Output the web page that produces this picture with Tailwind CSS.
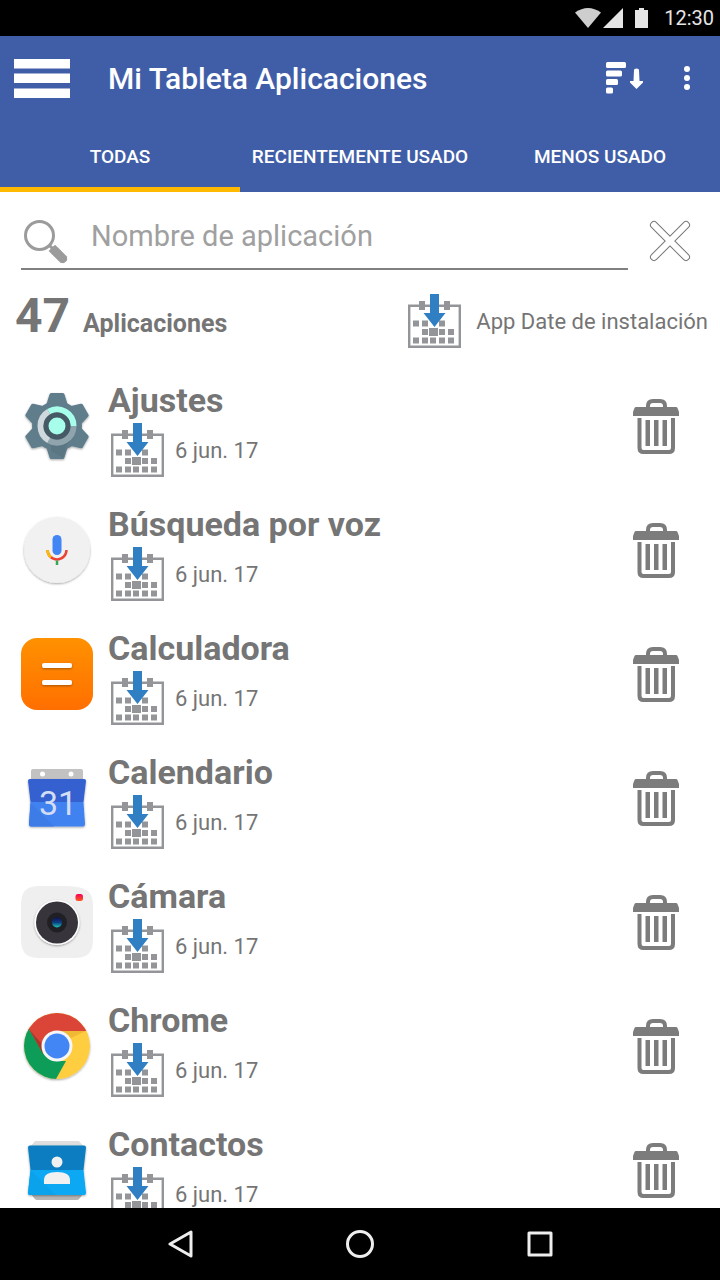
<!DOCTYPE html>
<html lang="es">
<head>
  <meta charset="UTF-8" />
  <meta name="viewport" content="width=device-width, initial-scale=1.0" />
  <title>Mi Tableta Aplicaciones</title>
  <script src="https://cdn.jsdelivr.net/npm/@tailwindcss/browser@4"></script>
  <script defer>
    document.addEventListener("DOMContentLoaded", () => {
      const apps = [
        { name: "Ajustes", icon: "settings", date: "6 jun. 17" },
        { name: "Búsqueda por voz", icon: "voice", date: "6 jun. 17" },
        { name: "Calculadora", icon: "calculator", date: "6 jun. 17" },
        { name: "Calendario", icon: "calendar", day: "31", date: "6 jun. 17" },
        { name: "Cámara", icon: "camera", date: "6 jun. 17" },
        { name: "Chrome", icon: "chrome", date: "6 jun. 17" },
        { name: "Contactos", icon: "contacts", date: "6 jun. 17" },
      ];
      const list = document.getElementById("appList");

      apps.forEach((app) => {
        const day = app.day
          ? `<span class="absolute inset-x-0 top-5 pl-0.5 text-center text-[34px] leading-[42px] text-[#d3ddf5]">${app.day}</span>`
          : "";
        const li = document.createElement("li");
        li.className = "flex h-[124px] items-center pl-[21px] pr-[41px]";
        li.innerHTML = `
          <div class="relative shrink-0"><svg class="size-[72px]"><use href="#${app.icon}" /></svg>${day}</div>
          <div class="ml-[15px] flex-1 self-start pt-[17px]">
            <h2 class="pb-1 text-[34px] leading-[38px] font-bold">${app.name}</h2>
            <div class="ml-[3px] flex items-center gap-[11px]">
              <svg class="h-[54px] w-[53px]"><use href="#install-date" /></svg>
              <span class="text-[22px]">${app.date}</span>
            </div>
          </div>
          <button class="pt-0.5" aria-label="Desinstalar ${app.name}"><svg class="h-14 w-[46px]"><use href="#trash" /></svg></button>
        `;
        list.appendChild(li);
      });
    });
  </script>
</head>
<body class="flex h-screen flex-col overflow-hidden bg-white font-['Roboto',sans-serif] text-[#757575]">

  <!-- icons -->
  <svg class="absolute h-0 w-0" aria-hidden="true">
    <defs>
      <linearGradient id="orange" x1="0" y1="0" x2="0" y2="1"><stop offset="0" stop-color="#ff9100" /><stop offset="1" stop-color="#ff6f00" /></linearGradient>
      <linearGradient id="pupil" x1="0" y1="0" x2="0" y2="1"><stop offset="0" stop-color="#10105c" /><stop offset=".5" stop-color="#0d3f80" /><stop offset="1" stop-color="#1cc5c0" /></linearGradient>
      <linearGradient id="flash" x1="0" y1="0" x2="0" y2="1"><stop offset="0" stop-color="#f5005c" /><stop offset="1" stop-color="#ff5a1e" /></linearGradient>
      <filter id="shadow" x="-20%" y="-20%" width="140%" height="150%"><feDropShadow dx="0" dy="1" stdDeviation="0.8" flood-opacity=".35" /></filter>
      <path id="tooth" d="M30 3h12q1 0 1.500 1.500l3 9.500h-21l3-9.500q.5-1.500 1.500-1.500z" />
      <clipPath id="disc"><circle cx="36" cy="36" r="33" /></clipPath>
    </defs>

    <symbol id="install-date" viewBox="0 0 53 54">
      <path d="M1.200 11.700h50.600v41.100H1.200z" fill="#fff" stroke="#939598" stroke-width="2.400" />
      <path fill="#939598" d="M11 7h6v9h-6zM36 7h6v9h-6zM5 26.500h6v6H5zM14 26.500h6v6h-6zM31 26.500h6v6h-6zM14 35h6v6h-6zM21 34h9v8h-9zM31 35h6v6h-6zM40 35h6v6h-6zM5 43.500h6v6H5zM14 43.500h6v6h-6zM22 43.500h6v6h-6zM31 43.500h6v6h-6zM40 43.500h6v6h-6z" />
      <path fill="#317fc3" d="M22 0h9v19h6.500L26.500 33 15.500 19H22z" />
    </symbol>

    <symbol id="trash" viewBox="0 0 46 56">
      <path d="M15 9V7q0-5 5-5h7q5 0 5 5v2" fill="none" stroke="#7c7c7c" stroke-width="4" />
      <path fill="#7c7c7c" d="M3 8h40q1 0 1.500 1l1.500 4v4H0v-4l1.500-4Q2 8 3 8z" />
      <path d="M6.500 19v30q0 4 4 4h25.500q4 0 4-4V19" fill="none" stroke="#7c7c7c" stroke-width="4" />
      <path fill="#7c7c7c" d="M12.500 21h4.500v26h-4.500zM21 21h4.500v26H21zM29.500 21H34v26h-4.500z" />
    </symbol>

    <symbol id="settings" viewBox="0 0 72 72">
      <g fill="#607d8b" filter="url(#shadow)">
        <circle cx="36" cy="36" r="25" />
        <use href="#tooth" />
        <use href="#tooth" transform="rotate(60 36 36)" />
        <use href="#tooth" transform="rotate(120 36 36)" />
        <use href="#tooth" transform="rotate(180 36 36)" />
        <use href="#tooth" transform="rotate(240 36 36)" />
        <use href="#tooth" transform="rotate(300 36 36)" />
      </g>
      <path d="M50 50L46 55 42 68 30 61V52z" fill="#5a7683" />
      <g fill="none" stroke-width="6">
        <path d="M27.750 21.710A16.500 16.500 0 0 1 52.500 36" stroke="#a7ffeb" />
        <path d="M52.500 36A16.500 16.500 0 0 1 27.750 50.290" stroke="#90a4ae" />
        <path d="M27.750 50.290A16.500 16.500 0 0 1 27.750 21.710" stroke="#cfd8dc" />
      </g>
      <circle cx="36" cy="36" r="13.500" fill="#455a64" />
      <circle cx="36" cy="36" r="8.500" fill="#a7ffeb" />
    </symbol>

    <symbol id="voice" viewBox="0 0 72 72">
      <circle cx="36" cy="36" r="33" fill="#f1f1f1" filter="url(#shadow)" />
      <rect x="31.500" y="21" width="9" height="20" rx="4.500" fill="#4285f4" />
      <path d="M26.500 36a9.500 9.500 0 0 0 19 0" fill="none" stroke="#ea4335" stroke-width="2.500" />
      <path d="M26.500 36a9.500 9.500 0 0 0 3.500 7.300" fill="none" stroke="#fbbc05" stroke-width="2.500" />
      <path d="M36 46.500V51" stroke="#34a853" stroke-width="2.500" />
    </symbol>

    <symbol id="calculator" viewBox="0 0 72 72">
      <rect width="72" height="72" rx="16" fill="url(#orange)" />
      <g fill="#fff" filter="url(#shadow)">
        <rect x="21" y="25" width="30" height="5" rx="2" />
        <rect x="21" y="42" width="30" height="5" rx="2" />
      </g>
    </symbol>

    <symbol id="calendar" viewBox="0 0 72 72">
      <path d="M12 7h48q2 0 2 2v10H10V9q0-2 2-2z" fill="#c2c2c2" />
      <circle cx="21.500" cy="12" r="2.500" fill="#fff" />
      <circle cx="50" cy="12" r="2.500" fill="#fff" />
      <g filter="url(#shadow)">
        <path d="M9 17h54q2 0 2 2l-2.500 21h-53L7 19q0-2 2-2z" fill="#3460cf" />
        <path d="M9.500 40h53L64 62q0 2.500-2 2.500H10q-2 0-2-2.500z" fill="#4182f0" />
      </g>
      <path d="M9.500 41L33 64.500H10q-2 0-2-2.500z" fill="#3d7be6" />
    </symbol>

    <symbol id="camera" viewBox="0 0 72 72">
      <path d="M36 0C62 0 72 2 72 20V52C72 68 66 72 52 72H20C6 72 0 68 0 52V20C0 4 6 0 20 0z" fill="#efefef" />
      <circle cx="36" cy="36.500" r="22.500" fill="#fff" filter="url(#shadow)" />
      <circle cx="36" cy="36.500" r="21" fill="#37343c" />
      <circle cx="36" cy="36.500" r="10" fill="#201f24" />
      <circle cx="36" cy="36.500" r="5" fill="url(#pupil)" />
      <rect x="54.500" y="8" width="7.500" height="7" rx="2.500" fill="url(#flash)" />
    </symbol>

    <symbol id="chrome" viewBox="0 0 72 72">
      <g filter="url(#shadow)">
        <g clip-path="url(#disc)">
          <path d="M0 0h72v72H0z" fill="#ffcd40" />
          <path d="M0 0h72v21H36L22.500 43 8 20H0z" fill="#db4437" />
          <path d="M0 6L22.500 43.500 36 51h9L35 69v3H0z" fill="#0f9d58" />
          <path d="M40 21h25L50 28z" fill="#efb935" />
          <path d="M8.500 20L22 44l-1-10z" fill="#a8382e" />
        </g>
      </g>
      <circle cx="36" cy="36" r="15.500" fill="#f6f6f6" />
      <circle cx="36" cy="36" r="12.500" fill="#4285f4" />
    </symbol>

    <symbol id="contacts" viewBox="0 0 72 72">
      <path d="M14 7h44l4 5H10z" fill="#dedede" />
      <path d="M10 60h52l-3 4q-1 2-3 2H16q-2 0-3-2z" fill="#b5b5b5" />
      <g filter="url(#shadow)">
        <path d="M9 11.500h54q2 0 2 2L62.500 36h-53L7 13.500q0-2 2-2z" fill="#0b7dc1" />
        <path d="M9.500 36h53L65 59q0 2-2 2H9q-2 0-2-2z" fill="#07a8f4" />
      </g>
      <path d="M9.500 36l25 25H9q-2 0-2-2z" fill="#0aa2ea" />
      <circle cx="36" cy="28" r="5.500" fill="#f1f1f1" />
      <path d="M23 50v-4q0-8 13-8t13 8v4z" fill="#f1f1f1" />
    </symbol>
  </svg>

  <!-- status bar -->
  <div class="flex h-9 shrink-0 items-center justify-end bg-black pr-1.5 text-[20px] text-[#e5e5e5]">
    <svg class="h-5 w-[26px]" viewBox="0 0 26 20"><path d="M0 4.500Q13-4.500 26 4.500L13 20z" fill="#cecece" /></svg>
    <svg class="ml-0.5 h-5 w-5" viewBox="0 0 20 20"><path d="M20 0v20H0z" fill="#e5e5e5" /></svg>
    <svg class="mr-4 ml-3 h-5 w-[13px]" viewBox="0 0 13 20"><path d="M4 0h5v2h4v18H0V2h4z" fill="#e5e5e5" /></svg>
    <span>12:30</span>
  </div>

  <header class="shrink-0 bg-[#405ea7] text-white">
    <div class="flex h-[84px] items-center pr-5 pl-3.5">
      <button class="pt-0.5" aria-label="Menú">
        <svg class="h-10 w-14" viewBox="0 0 56 40" fill="#fff"><path d="M0 0h56v9.500H0zM0 14.500h56V24H0zM0 29.500h56V39H0z" /></svg>
      </button>
      <h1 class="ml-[38px] flex-1 text-[30px] font-medium">Mi Tableta Aplicaciones</h1>
      <button aria-label="Ordenar">
        <svg class="h-8 w-[38px]" viewBox="0 0 38 32" fill="#fff">
          <rect y="0" width="20" height="6" rx="1.500" /><rect y="8.500" width="16" height="6" rx="1.500" />
          <rect y="17" width="12" height="6" rx="1.500" /><rect y="25.500" width="7" height="6" rx="1.500" />
          <path d="M28 8q0-1.500 2.500-1.500T33 8l.5 11h3.500v1.500L30.500 27 24 20.500V19h3.500z" />
        </svg>
      </button>
      <button class="ml-[30px] px-2.5" aria-label="Más opciones">
        <svg class="h-6 w-1.5" viewBox="0 0 6 24" fill="#fff"><circle cx="3" cy="3" r="3" /><circle cx="3" cy="12" r="3" /><circle cx="3" cy="21" r="3" /></svg>
      </button>
    </div>
    <nav class="grid h-[72px] grid-cols-3 text-center text-[19px] leading-[74px] font-medium">
      <a href="#todas" class="h-[72px] border-b-5 border-[#ffb900]">TODAS</a>
      <a href="#recientes" class="h-[72px] whitespace-nowrap">RECIENTEMENTE USADO</a>
      <a href="#menos" class="h-[72px]">MENOS USADO</a>
    </nav>
  </header>

  <main class="flex-1 overflow-hidden">
    <form class="flex h-[78px]">
      <label class="ml-[21px] flex flex-1 items-end border-b-2 border-[#808080] pl-[3px]">
        <svg class="mb-1 h-11 w-11 shrink-0" viewBox="0 0 44 44" fill="none" stroke="#9b9b9b">
          <circle cx="15.500" cy="15.500" r="14" stroke-width="3" />
          <path d="M25 25l5 5" stroke-width="3" />
          <path d="M30.500 30.500l8.500 8.500" stroke-width="8" stroke-linecap="round" />
          <path d="M31 31l6 6" stroke-width="9" stroke-linecap="square" />
        </svg>
        <input type="text" aria-label="Nombre de aplicación" placeholder="Nombre de aplicación" class="mb-[13px] ml-[23px] h-9 w-full text-[29px] outline-none placeholder:text-[#a0a0a0]" />
      </label>
      <button type="reset" class="mr-2 flex w-[84px] items-end justify-center pb-2" aria-label="Borrar">
        <svg class="h-[42px] w-[42px]" viewBox="0 0 42 42" fill="none" stroke-linecap="round">
          <path d="M5 5l32 32M37 5L5 37" stroke="#777" stroke-width="8" />
          <path d="M5 5l32 32M37 5L5 37" stroke="#fff" stroke-width="6" />
        </svg>
      </button>
    </form>

    <div class="flex h-[94px] items-start pt-6 pr-3 pl-[15px]">
      <p class="flex flex-1 items-baseline gap-[13px] font-bold"><span class="text-[48px] leading-[44px]">47</span><span class="text-[25px]">Aplicaciones</span></p>
      <div class="flex items-center gap-[15px]">
        <svg class="h-[54px] w-[53px]"><use href="#install-date" /></svg>
        <span class="text-[22px]">App Date de instalación</span>
      </div>
    </div>

    <ul id="appList"></ul>
  </main>

  <!-- navigation bar -->
  <footer class="grid h-[72px] shrink-0 grid-cols-3 items-center justify-items-center bg-black px-[12.5%]">
    <button aria-label="Atrás"><svg class="size-7" viewBox="0 0 28 28" fill="none" stroke="#eee" stroke-width="3" stroke-linejoin="round"><path d="M25 2v24L4 14z" /></svg></button>
    <button aria-label="Inicio"><svg class="size-7" viewBox="0 0 28 28" fill="none" stroke="#eee" stroke-width="3"><circle cx="14" cy="14" r="12.500" /></svg></button>
    <button aria-label="Recientes"><svg class="size-7" viewBox="0 0 28 28" fill="none" stroke="#eee" stroke-width="3" stroke-linejoin="round"><path d="M3 3h22v22H3z" /></svg></button>
  </footer>
</body>
</html>
